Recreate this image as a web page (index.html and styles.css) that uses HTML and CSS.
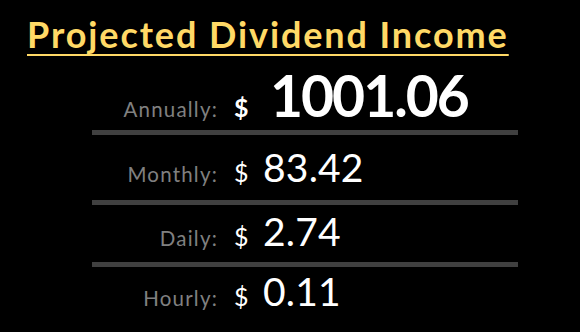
FILE: index.html
```html
<!DOCTYPE html>
<html>
<head>
<meta charset="utf-8">
<link rel="stylesheet" href="styles.css">
</head>
<body>
<main class="card">
  <h1 class="title">Projected Dividend Income</h1>
  <div class="rows">
    <div class="row row-annual">
      <span class="label">Annually:</span>
      <span class="cur cur-bold">$</span>
      <span class="val val-big">1001.06</span>
    </div>
    <div class="sep"></div>
    <div class="row row-monthly">
      <span class="label">Monthly:</span>
      <span class="cur">$</span>
      <span class="val">83.42</span>
    </div>
    <div class="sep"></div>
    <div class="row row-daily">
      <span class="label">Daily:</span>
      <span class="cur">$</span>
      <span class="val">2.74</span>
    </div>
    <div class="sep"></div>
    <div class="row row-hourly">
      <span class="label">Hourly:</span>
      <span class="cur">$</span>
      <span class="val">0.11</span>
    </div>
  </div>
</main>
</body>
</html>
```

FILE: styles.css
```css
html, body {
  margin: 0;
  padding: 0;
  background: #000;
}
body {
  width: 580px;
  height: 332px;
  overflow: hidden;
  font-family: Lato, "DejaVu Sans", sans-serif;
}
.card {
  padding-top: 13px;
}
.title {
  margin: 0 0 0 27px;
  font-size: 36px;
  line-height: 43px;
  font-weight: 700;
  color: #ffd966;
  letter-spacing: 1.9px;
  text-decoration: underline;
  text-decoration-thickness: 2px;
  text-underline-offset: 6px;
  white-space: nowrap;
}
.rows {
  margin-left: 92px;
  width: 426px;
}
.row {
  display: flex;
  align-items: baseline;
  box-sizing: border-box;
}
.row-annual { height: 74px; padding-top: 11px; }
.row-monthly { height: 65px; padding-top: 13px; }
.row-daily { height: 57px; padding-top: 7px; }
.row-hourly { height: 65px; padding-top: 5px; }
.label {
  width: 126px;
  text-align: right;
  font-size: 20.5px;
  line-height: 1;
  color: #808080;
  letter-spacing: 1.2px;
}
.cur {
  margin-left: 16px;
  width: 29px;
  font-size: 25px;
  line-height: 1;
  color: #fff;
  font-weight: 400;
}
.cur-bold {
  font-weight: 700;
  width: 36px;
}
.val {
  font-size: 39px;
  line-height: 1;
  color: #fff;
  font-weight: 400;
  letter-spacing: 0.2px;
}
.val-big {
  font-size: 57px;
  font-weight: 700;
  letter-spacing: -2px;
}
.sep {
  height: 5px;
  background: #404040;
}
```
